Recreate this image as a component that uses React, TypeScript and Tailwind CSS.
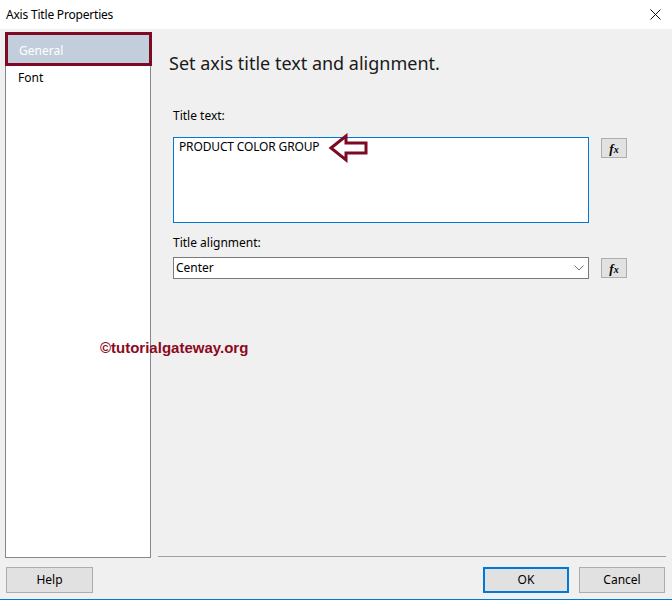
import React from "react";

const ui = { fontFamily: '"Noto Sans", "Open Sans", sans-serif' };

const FxButton = () => (
  <button className="w-[26px] h-[20px] bg-[#e1e1e1] border border-[#adadad] flex items-center justify-center">
    <span
      className="text-[13px] font-bold italic leading-none text-black"
      style={{ fontFamily: '"Liberation Serif", serif' }}
    >
      f<span className="text-[10px]">x</span>
    </span>
  </button>
);

const App = () => {
  return (
    <div
      className="relative w-[672px] h-[600px] bg-[#f0f0f0] flex flex-col text-[12px] text-black border-b border-[#0078d7] overflow-hidden"
      style={ui}
    >
      {/* title bar */}
      <div className="h-[29px] bg-white flex items-center justify-between pl-[6px] pr-[10px] shrink-0">
        <span className="text-[12px] tracking-[-0.2px]">Axis Title Properties</span>
        <svg width="11" height="11" viewBox="0 0 11 11" className="mr-[1px]">
          <path d="M0.5 0.5 L10.5 10.5 M10.5 0.5 L0.5 10.5" stroke="#111" strokeWidth="1" />
        </svg>
      </div>

      <div className="flex h-[530px] shrink-0">
        {/* left nav */}
        <div className="pl-[5px] pt-[3px]">
          <div className="w-[146px] h-[526px] bg-white border border-[#828790]">
            <div className="-ml-[1px] -mt-[1px] w-[147px] h-[34px] border-[3px] border-[#7d0a22] bg-[#c2cedc] flex items-center pl-[11px] pt-[3px]">
              <span className="text-white">General</span>
            </div>
            <div className="h-[22px] flex items-center pl-[12px] mt-[1px]">Font</div>
          </div>
        </div>

        {/* content */}
        <div className="flex-1 flex flex-col">
          <div className="pl-[18px] pt-[21px] text-[18px] leading-[26px] text-[#1a1a1a]">
            Set axis title text and alignment.
          </div>

          <div className="pl-[22px] mt-[32px] leading-[16px]">Title text:</div>
          <div className="pl-[22px] mt-[13px] flex items-start gap-[12px]">
            <div className="relative w-[416px] h-[86px] bg-white border border-[#0078d7] px-[5px]">
              <span className="leading-[16px] tracking-[-0.15px]">PRODUCT COLOR GROUP</span>
              <svg
                width="42"
                height="32"
                viewBox="0 0 42 32"
                className="absolute left-[154px] top-[-5px]"
              >
                <polygon
                  points="3,15 18,3 18,10 38,10 38,20 18,20 18,27"
                  fill="none"
                  stroke="#7d0a22"
                  strokeWidth="3"
                  strokeLinejoin="miter"
                />
              </svg>
            </div>
            <div className="mt-[1px]">
              <FxButton />
            </div>
          </div>

          <div className="pl-[22px] mt-[12px] leading-[16px]">Title alignment:</div>
          <div className="pl-[22px] mt-[6px] flex items-center gap-[12px]">
            <div className="w-[416px] h-[22px] bg-white border border-[#7a7a7a] flex items-center justify-between pl-[2px] pr-[4px]">
              <span>Center</span>
              <svg width="10" height="6" viewBox="0 0 10 6">
                <path d="M0.5 0.5 L5 5 L9.5 0.5" fill="none" stroke="#777" strokeWidth="1" />
              </svg>
            </div>
            <FxButton />
          </div>

          <div className="flex-1" />
          <div className="ml-[7px] mr-[6px] h-[1px] bg-[#a0a0a0] mb-[2px]" />
        </div>
      </div>

      {/* footer buttons */}
      <div className="flex items-start pt-[8px] pl-[6px] pr-[7px]">
        <button className="w-[87px] h-[26px] bg-[#e1e1e1] border border-[#adadad]">Help</button>
        <div className="flex-1" />
        <button className="w-[86px] h-[26px] bg-[#e1e1e1] border-2 border-[#0078d7]">OK</button>
        <button className="ml-[10px] w-[86px] h-[26px] bg-[#e1e1e1] border border-[#adadad]">Cancel</button>
      </div>

      {/* watermark */}
      <div
        className="absolute left-[100px] top-[338px] text-[15px] font-bold text-[#8b0a1e] leading-[20px]"
        style={{ fontFamily: '"Liberation Sans", sans-serif' }}
      >
        ©tutorialgateway.org
      </div>
    </div>
  );
};

export default App;
